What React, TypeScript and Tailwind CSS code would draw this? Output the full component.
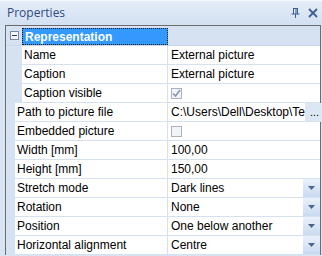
import React from 'react';

type Row = {
  label: string;
  nested?: boolean;
  value?: string;
  kind?: 'text' | 'check' | 'uncheck' | 'dots' | 'drop';
};

const rows: Row[] = [
  { label: 'Name', nested: true, value: 'External picture' },
  { label: 'Caption', nested: true, value: 'External picture' },
  { label: 'Caption visible', nested: true, kind: 'check' },
  { label: 'Path to picture file', value: 'C:\\Users\\Dell\\Desktop\\Te', kind: 'dots' },
  { label: 'Embedded picture', kind: 'uncheck' },
  { label: 'Width [mm]', value: '100,00' },
  { label: 'Height [mm]', value: '150,00' },
  { label: 'Stretch mode', value: 'Dark lines', kind: 'drop' },
  { label: 'Rotation', value: 'None', kind: 'drop' },
  { label: 'Position', value: 'One below another', kind: 'drop' },
  { label: 'Horizontal alignment', value: 'Centre', kind: 'drop' },
];

const Checkbox = ({ checked }: { checked: boolean }) => (
  <div className="w-[11px] h-[11px] border border-[#a9b3c0] bg-[#f2f4f7] flex items-center justify-center">
    {checked && (
      <svg width="9" height="9" viewBox="0 0 9 9">
        <path d="M1 4.5 L3.5 7 L8 1" fill="none" stroke="#8797b2" strokeWidth="1.6" />
      </svg>
    )}
  </div>
);

const DropButton = () => (
  <div className="w-[17px] h-full bg-gradient-to-b from-[#eaf1fb] to-[#c9daf1] flex items-center justify-center">
    <svg width="7" height="4" viewBox="0 0 7 4">
      <path d="M0 0 H7 L3.5 4 Z" fill="#4a6590" />
    </svg>
  </div>
);

export default function App() {
  return (
    <div className="w-[322px] h-[256px] overflow-hidden bg-[#d8e4f3] font-['Liberation_Sans',Arial,sans-serif] text-[12px] text-black">
      {/* title bar */}
      <div className="h-[25px] flex items-center pl-[7px] pr-[4px] bg-gradient-to-b from-[#e4edf8] to-[#d3e0f2] border-t border-[#f4f8fd]">
        <span className="text-[#2c4a80] text-[12px] font-['Open_Sans',sans-serif]">Properties</span>
        <div className="ml-auto flex items-center gap-[8px]">
          <svg width="9" height="10" viewBox="0 0 9 10">
            <path d="M2 0.5 H7 M2.5 0.5 V6 M6.5 0.5 V6 M0.5 6 H8.5 M4.5 6 V10 M5 0.5 V6" stroke="#3d5f96" strokeWidth="1" fill="none" />
          </svg>
          <svg width="10" height="10" viewBox="0 0 10 10">
            <path d="M1 1 L9 9 M9 1 L1 9" stroke="#3d5f96" strokeWidth="1.8" fill="none" />
          </svg>
        </div>
      </div>

      {/* grid */}
      <div className="ml-[5px] w-[316px] border-l border-r border-t border-[#6c6c6c] bg-white">
        {/* category header */}
        <div className="h-[20px] flex bg-[#d6e2f2] border-b border-[#c9d7ea]">
          <div className="w-[16px] flex items-center justify-center pl-[1px]">
            <div className="w-[9px] h-[9px] border border-[#7a8aa3] bg-[#f4f6f9] flex items-center justify-center">
              <div className="w-[5px] h-[1px] bg-[#2b3b52]" />
            </div>
          </div>
          <div className="w-[146px] mt-[2px] bg-[#3399ff] border border-[#1a1a1a] border-dotted flex items-center pl-[2px]">
            <span className="text-white font-bold">Representation</span>
          </div>
          <div className="flex-1" />
        </div>

        {rows.map((r) => (
          <div key={r.label} className="h-[19px] flex">
            <div className={`${r.nested ? 'w-[16px]' : 'w-[9px]'} bg-[#d6e2f2] shrink-0`} />
            <div className="flex-1 flex border-b border-[#d6e1ef]">
              <div className={`${r.nested ? 'w-[146px]' : 'w-[153px]'} pl-[2px] flex items-center border-r border-[#d6e1ef] whitespace-nowrap overflow-hidden`}>
                {r.label}
              </div>
              <div className="flex-1 flex items-center pl-[3px] whitespace-nowrap overflow-hidden">
                {r.kind === 'check' && <Checkbox checked />}
                {r.kind === 'uncheck' && <Checkbox checked={false} />}
                {r.kind !== 'check' && r.kind !== 'uncheck' && (
                  <span className="flex-1 overflow-hidden">{r.value}</span>
                )}
                {r.kind === 'dots' && (
                  <div className="w-[19px] h-full bg-[#dce7f5] flex items-center justify-center text-[11px]">...</div>
                )}
                {r.kind === 'drop' && <DropButton />}
              </div>
            </div>
          </div>
        ))}
      </div>
    </div>
  );
}
